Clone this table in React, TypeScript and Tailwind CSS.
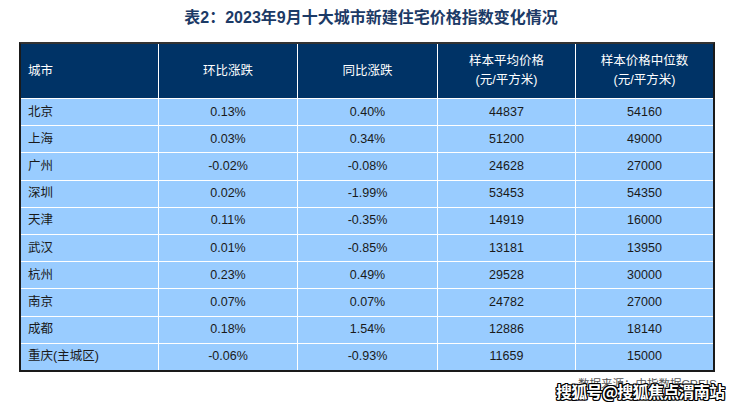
import React from "react";

const rows: [string, string, string, string, string][] = [
  ["北京", "0.13%", "0.40%", "44837", "54160"],
  ["上海", "0.03%", "0.34%", "51200", "49000"],
  ["广州", "-0.02%", "-0.08%", "24628", "27000"],
  ["深圳", "0.02%", "-1.99%", "53453", "54350"],
  ["天津", "0.11%", "-0.35%", "14919", "16000"],
  ["武汉", "0.01%", "-0.85%", "13181", "13950"],
  ["杭州", "0.23%", "0.49%", "29528", "30000"],
  ["南京", "0.07%", "0.07%", "24782", "27000"],
  ["成都", "0.18%", "1.54%", "12886", "18140"],
  ["重庆(主城区)", "-0.06%", "-0.93%", "11659", "15000"],
];

const font = { fontFamily: '"Liberation Sans", Arial, "Noto Sans CJK SC", sans-serif' };

export default function App() {
  return (
    <div className="w-[740px] h-[415px] bg-white relative overflow-hidden" style={font}>
      <div className="h-[35px] flex items-center justify-center pt-[1px] text-[16px] font-bold text-[#1c3a66] pl-[2px]">
        表2：2023年9月十大城市新建住宅价格指数变化情况
      </div>
      <div className="ml-[19px] mt-[7px] w-[696px] border-2 border-[#1a1a1a] border-t-[#333]">
        <div className="grid grid-cols-[138px_139px_140px_138px_137px] h-[54px] bg-[#003366] text-white text-[12.5px]">
          <div className="flex items-center pl-[7px] border-r border-white">城市</div>
          <div className="flex items-center justify-center border-r border-white">环比涨跌</div>
          <div className="flex items-center justify-center border-r border-white">同比涨跌</div>
          <div className="flex flex-col items-center justify-center border-r border-white leading-[19px]">
            <span>样本平均价格</span>
            <span>(元/平方米)</span>
          </div>
          <div className="flex flex-col items-center justify-center leading-[19px]">
            <span>样本价格中位数</span>
            <span>(元/平方米)</span>
          </div>
        </div>
        {rows.map((r, i) => (
          <div
            key={i}
            className="grid grid-cols-[138px_139px_140px_138px_137px] h-[27.2px] bg-[#99ccff] text-[#1a1a1a] text-[12.5px] border-t border-white"
          >
            <div className="flex items-center pl-[7px] border-r border-white">{r[0]}</div>
            <div className="flex items-center justify-center border-r border-white">{r[1]}</div>
            <div className="flex items-center justify-center border-r border-white">{r[2]}</div>
            <div className="flex items-center justify-center border-r border-white">{r[3]}</div>
            <div className="flex items-center justify-center">{r[4]}</div>
          </div>
        ))}
      </div>
      <div className="absolute left-[578px] top-[376px] text-[11.5px] text-[#555] whitespace-nowrap">数据来源：中指数据CREIS</div>
      <div
        className="absolute left-[556px] top-[380px] text-[16px] leading-[22px] font-bold text-white whitespace-nowrap tracking-[-0.7px]"
        style={{
          fontFamily: '"Noto Sans CJK SC", sans-serif',
          textShadow:
            "1px 0 0 #000, -1px 0 0 #000, 0 1px 0 #000, 0 -1px 0 #000, 1px 1px 0 #000, -1px -1px 0 #000, 1px -1px 0 #000, -1px 1px 0 #000",
        }}
      >
        搜狐号@搜狐焦点渭南站
      </div>
    </div>
  );
}
